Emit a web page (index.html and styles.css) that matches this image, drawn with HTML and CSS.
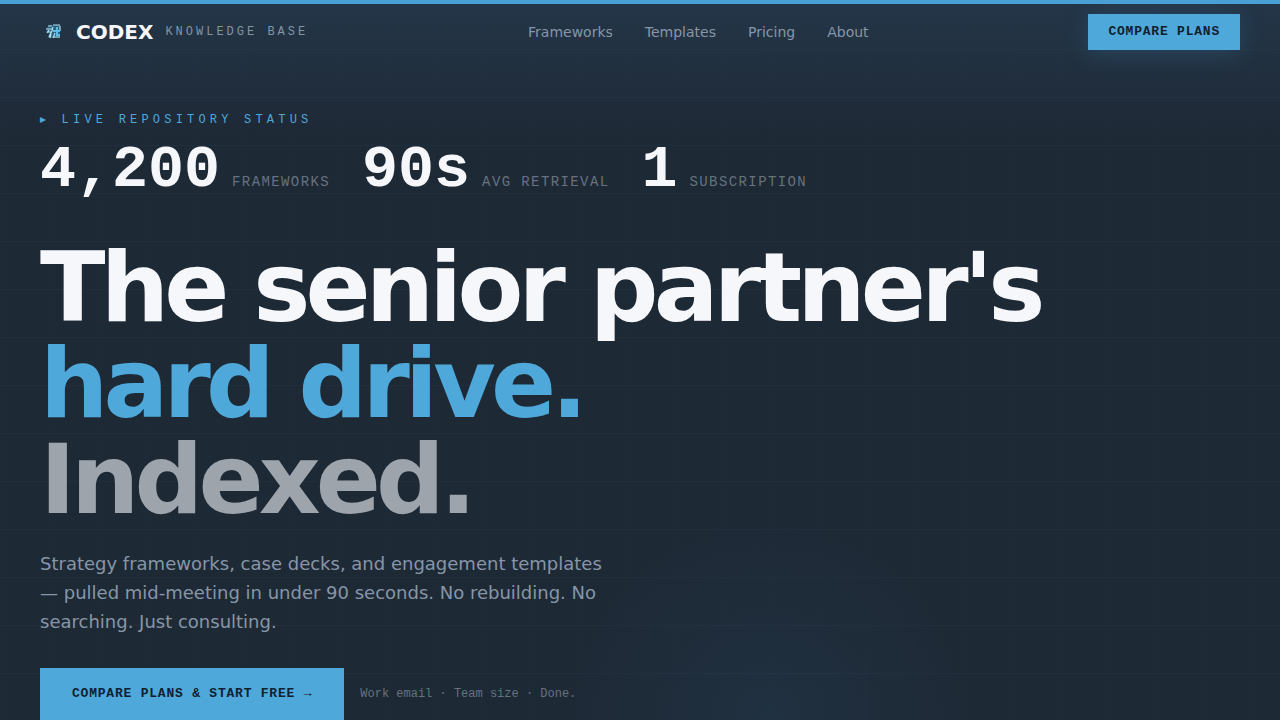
FILE: index.html
```html
<!DOCTYPE html>
<html lang="en">
<head>
    <meta charset="UTF-8">
    <meta name="viewport" content="width=device-width, initial-scale=1.0">
    <title>Codex Knowledge Base</title>
    <link rel="stylesheet" href="styles.css">
</head>
<body>
    <div class="page">
        <header class="header">
            <a href="#" class="brand">
                <svg class="brand-mark" viewBox="0 0 28 28" aria-hidden="true">
                    <path d="M7 9l3-2h10v13H8l1-5-3-1z" fill="#2a5f7c"/>
                    <path d="M8 8h4M6 11h6M7 14h4M9 12l-2 3M13 9l-1 4-3 6M13 7h7M20 8v5M14 19h6M15 15l-2 5M11 16l-1 4" stroke="#b5dfeb" stroke-width="1.2" fill="none"/>
                    <path d="M13 12h7v2h-7zM16 9h2v9h-2zM18 16h2v2h-2z" fill="#5bbce8"/>
                </svg>
                <span class="brand-name">CODEX</span>
                <span class="brand-tag">KNOWLEDGE BASE</span>
            </a>
            <nav class="nav">
                <a href="#frameworks">Frameworks</a>
                <a href="#templates">Templates</a>
                <a href="#pricing">Pricing</a>
                <a href="#about">About</a>
            </nav>
            <button type="button" class="btn btn-small">COMPARE PLANS</button>
        </header>

        <main class="hero">
            <p class="eyebrow">▸ LIVE REPOSITORY STATUS</p>
            <div class="stats">
                <div class="stat"><span class="stat-value">4,200</span><span class="stat-label">FRAMEWORKS</span></div>
                <div class="stat"><span class="stat-value">90s</span><span class="stat-label">AVG RETRIEVAL</span></div>
                <div class="stat"><span class="stat-value">1</span><span class="stat-label">SUBSCRIPTION</span></div>
            </div>
            <h1 class="title">
                <span>The senior partner's</span>
                <span class="title-accent">hard drive.</span>
                <span class="title-muted">Indexed.</span>
            </h1>
            <p class="lead">Strategy frameworks, case decks, and engagement templates — pulled mid-meeting in under 90 seconds. No rebuilding. No searching. Just consulting.</p>
            <div class="actions">
                <button type="button" class="btn btn-large">COMPARE PLANS &amp; START FREE →</button>
                <span class="actions-note">Work email · Team size · Done.</span>
            </div>
        </main>
    </div>
</body>
</html>
```
FILE: styles.css
```css
* {
    box-sizing: border-box;
    margin: 0;
    padding: 0;
}

body {
    background: #1e2936;
    color: #f5f7fa;
    font-family: "DejaVu Sans", sans-serif;
}

.page {
    min-height: 100vh;
    overflow: hidden;
    border-top: 4px solid #4a9fd4;
    /* grid lines, top fade and the glow under the hero */
    background-image:
        linear-gradient(rgba(74, 159, 212, 0.04) 1px, transparent 1px),
        linear-gradient(90deg, rgba(74, 159, 212, 0.015) 1px, transparent 1px),
        linear-gradient(rgba(39, 62, 84, 0.6), rgba(39, 62, 84, 0) 130px),
        radial-gradient(circle at 60% 100%, rgba(33, 54, 72, 0.6), rgba(33, 54, 72, 0) 200px);
    background-size: 48px 48px, 48px 48px, auto, auto;
    background-position: 0 -3px, 1px 0, 0 0, 0 0;
}

.header {
    display: flex;
    align-items: center;
    justify-content: space-between;
    height: 56px;
    padding: 0 40px;
}

.brand {
    display: flex;
    align-items: center;
    gap: 8px;
    color: #f5f7fa;
    text-decoration: none;
}

.brand-mark {
    width: 28px;
    height: 28px;
}

.brand-name {
    font-size: 20px;
    font-weight: bold;
}

.brand-tag {
    margin-left: 4px;
    color: #8593a3;
    font-family: "Liberation Mono", monospace;
    font-size: 12px;
    letter-spacing: 0.25em;
}

.nav {
    display: flex;
    gap: 32px;
}

.nav a {
    color: #8796a6;
    font-size: 14px;
    text-decoration: none;
}

.btn {
    border: 0;
    background: #4fa8da;
    color: #10202f;
    font-family: "Liberation Mono", monospace;
    font-size: 13px;
    font-weight: bold;
    letter-spacing: 0.06em;
    cursor: pointer;
}

.btn-small {
    height: 36px;
    padding: 0 20px 2px;
    box-shadow: 0 4px 24px rgba(74, 159, 212, 0.2);
}

.btn-large {
    height: 52px;
    padding: 0 32px 2px;
}

.hero {
    padding: 52px 40px 0;
}

.eyebrow {
    color: #4fa8da;
    font-family: "Liberation Mono", "DejaVu Sans", monospace;
    font-size: 12px;
    line-height: 16px;
    letter-spacing: 0.35em;
}

.stats {
    display: flex;
    flex-wrap: wrap;
    gap: 32px;
    margin-top: 12px;
}

.stat {
    display: flex;
    align-items: baseline;
    gap: 12px;
    font-family: "Liberation Mono", monospace;
}

.stat-value {
    font-size: 60px;
    font-weight: bold;
    line-height: 60px;
}

.stat-label {
    color: #66727f;
    font-size: 14px;
    letter-spacing: 0.1em;
}

.title {
    margin-top: 40px;
    font-size: 96px;
    font-weight: bold;
    line-height: 96px;
    letter-spacing: -0.05em;
}

.title span {
    display: block;
}

.title .title-accent {
    color: #4fa8da;
}

.title .title-muted {
    color: #9ea4ab;
}

.lead {
    max-width: 580px;
    margin-top: 21px;
    color: #8796a6;
    font-size: 18px;
    line-height: 29px;
}

.actions {
    display: flex;
    align-items: center;
    gap: 16px;
    margin-top: 32px;
}

.actions-note {
    color: #66727f;
    font-family: "Liberation Mono", monospace;
    font-size: 12px;
}
```
